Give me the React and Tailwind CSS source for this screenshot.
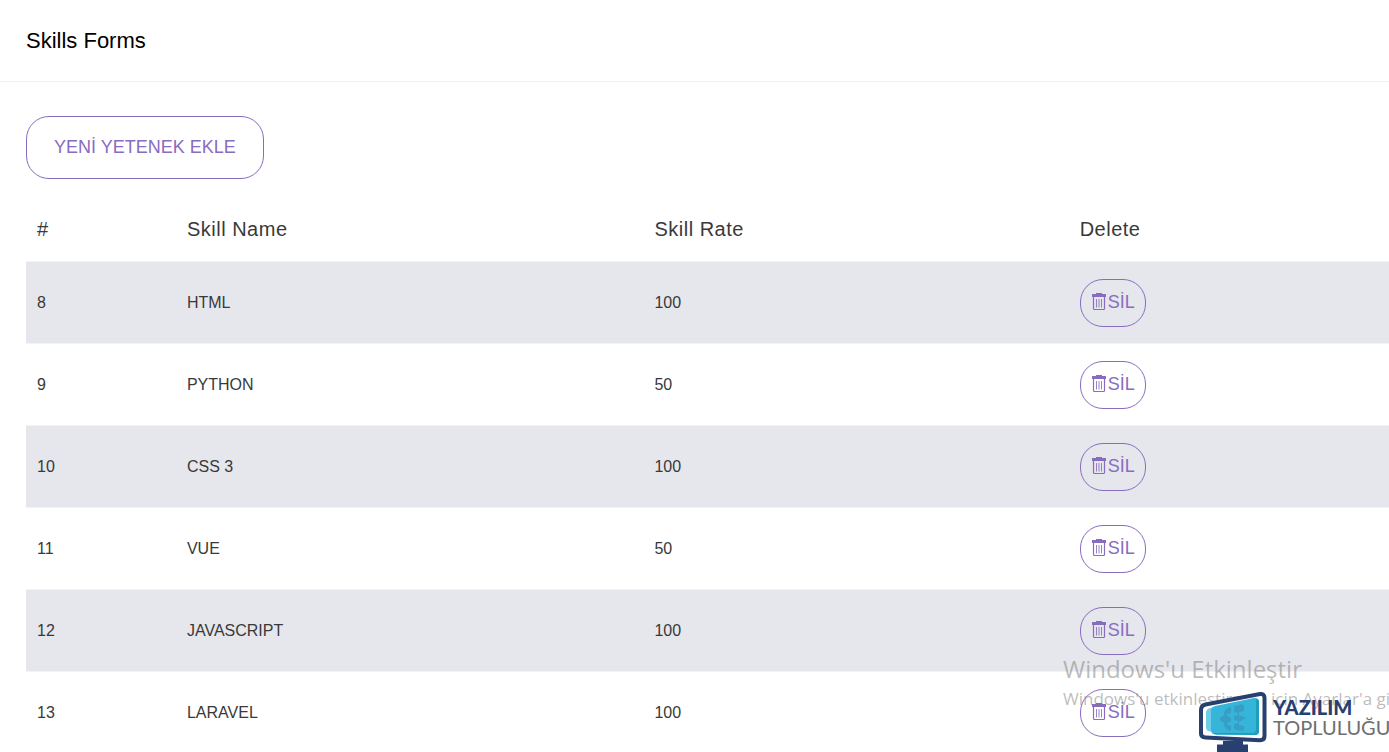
import React from "react";

const skills = [
  { id: 8, name: "HTML", rate: 100 },
  { id: 9, name: "PYTHON", rate: 50 },
  { id: 10, name: "CSS 3", rate: 100 },
  { id: 11, name: "VUE", rate: 50 },
  { id: 12, name: "JAVASCRIPT", rate: 100 },
  { id: 13, name: "LARAVEL", rate: 100 },
];

function TrashIcon() {
  return (
    <svg viewBox="0 0 17 18" className="h-[18px] w-[17px] shrink-0" fill="none" aria-hidden="true">
      <path d="M5 1V0h6v1h4v3H1V1z" fill="#886cc0" />
      <path d="M2.500 4v11.500q0 1 1 1h9q1 0 1-1V4" stroke="#886cc0" strokeWidth="1.200" />
      <path d="M5.500 6v8.500M8 6v8.500M10.500 6v8.500" stroke="#886cc0" strokeOpacity="0.850" />
    </svg>
  );
}

function MonitorLogo() {
  return (
    <svg viewBox="0 0 68 60" className="h-[60px] w-[68px] shrink-0" aria-hidden="true">
      <path d="M24 49h20v3.500h5V60H18v-7.500h6z" fill="#27406f" />
      <path
        d="M6.500 12.500 61 2Q65.500 1.500 65.500 6V44Q65.500 48.200 61 48.200L6.500 45.500Q2 45.300 2 41.500V18Q2 13.500 6.500 12.500Z"
        fill="#fff"
        stroke="#27406f"
        strokeWidth="4"
      />
      <path d="M11 16 52 8Q56 7.500 56 11V37Q56 40 52 40L12 39.500Q7 39.500 7 35V21Q7 17 11 16Z" fill="#6fcde8" />
      <path d="M16 14 55 6Q60 5.500 60 10V39Q60 43 56 43L17 42.500Q12 42.500 12 38V19Q12 15 16 14Z" fill="#35b5d9" />
      <path d="M57 7Q60 7 60 10V39Q60 43 56 43L17 42.500 14 41 53 41Q57 41 57 37Z" fill="#1d9fbb" />
      <path
        d="M32 15v6l-5 2 5 3v3l-5 3 5 2v5q-6-1-7-6v-2l-4-3v-2l4-3v-2q1-5 7-6Z M35 14l8-2 2 2v5l-5 1v3l7 3-7 4v3l5 1v4l-3 1-7-2v-5l4-1v-2l-4-1v-4l4-1v-2l-4-1Z"
        fill="#3898c0"
        fillOpacity="0.800"
      />
    </svg>
  );
}

export default function App() {
  return (
    <div className="relative h-screen overflow-hidden bg-white font-['Liberation_Sans',Arial,sans-serif] text-base text-[#393939]">
      <header className="flex h-[82px] items-center border-b border-[#f3f3f5] px-[26px]">
        <h1 className="text-[22px] leading-7 text-black">Skills Forms</h1>
      </header>
      <main className="pt-[34px] pl-[26px]">
        <button
          type="button"
          className="flex h-[63px] items-center rounded-[23px] border border-[#886cc0] px-[27px] pb-[2px] text-lg text-[#886cc0]"
        >
          YENİ YETENEK EKLE
        </button>
        <table className="mt-4 w-full table-fixed border-collapse text-left">
          <thead>
            <tr className="h-[66px] text-xl tracking-wide">
              <th scope="col" className="w-[11%] px-[11px] pt-[2px] font-normal">#</th>
              <th scope="col" className="w-[34.3%] px-[11px] pt-[2px] font-normal">Skill Name</th>
              <th scope="col" className="w-[31.2%] px-[11px] pt-[2px] font-normal">Skill Rate</th>
              <th scope="col" className="px-[11px] pt-[2px] font-normal">Delete</th>
            </tr>
          </thead>
          <tbody>
            {skills.map((skill) => (
              <tr key={skill.id} className="h-[82px] border-t border-[#f3f3f5] odd:bg-[#e6e7ec]">
                <td className="px-[11px] pt-[2px]">{skill.id}</td>
                <td className="px-[11px] pt-[2px]">{skill.name}</td>
                <td className="px-[11px] pt-[2px]">{skill.rate}</td>
                <td className="px-[11px] pt-[2px]">
                  <button
                    type="button"
                    className="flex h-12 items-center rounded-[23px] border border-[#886cc0] px-[10px] pb-[2px] text-lg text-[#886cc0]"
                  >
                    <TrashIcon />
                    SİL
                  </button>
                </td>
              </tr>
            ))}
          </tbody>
        </table>
      </main>

      <div className="pointer-events-none absolute top-[653px] left-[1063px] font-['Open_Sans',sans-serif] whitespace-nowrap text-[#7a7a7a]/50">
        <p className="text-2xl leading-8">Windows'u Etkinleştir</p>
        <p className="text-[17px] leading-7">Windows'u etkinleştirmek için Ayarlar'a gidin.</p>
      </div>
      <div className="pointer-events-none absolute top-[692px] left-[1199px] flex gap-[6px] font-[Lato,sans-serif] text-xl leading-5 whitespace-nowrap">
        <MonitorLogo />
        <div className="pt-[5px]">
          <p className="font-black text-[#27406f]">YAZILIM</p>
          <p className="text-[#6f6f6f]">TOPLULUĞU</p>
        </div>
      </div>
    </div>
  );
}
